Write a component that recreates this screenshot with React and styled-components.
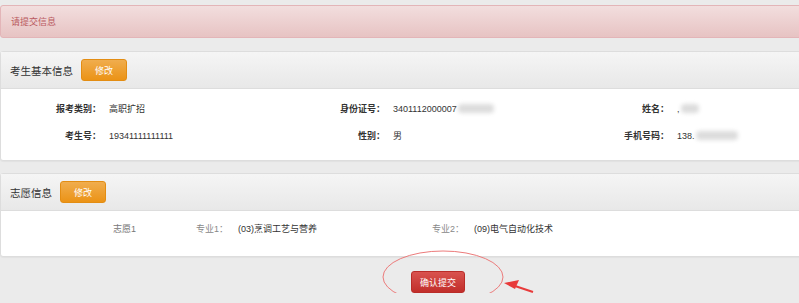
import styled, { createGlobalStyle } from "styled-components";

const GlobalStyle = createGlobalStyle`
    html, body {
        margin: 0;
        padding: 0;
        background: #ebebeb;
        overflow: hidden;
    }
    body {
        font-family: "Liberation Sans", "Noto Sans CJK SC", sans-serif;
    }
`;

function App() {
    return (
        <Page>
            <GlobalStyle />
            <Alert>请提交信息</Alert>

            <Panel>
                <PanelHeading>
                    <Title>考生基本信息</Title>
                    <EditButton>修改</EditButton>
                </PanelHeading>
                <InfoBody>
                    <InfoGrid>
                        <Label>报考类别：</Label>
                        <Value>高职扩招</Value>
                        <Label>身份证号：</Label>
                        <Value>
                            3401112000007<Blur $w={36} />
                        </Value>
                        <Label>姓名：</Label>
                        <Value>
                            ,<Blur $w={18} />
                        </Value>

                        <Label>考生号：</Label>
                        <Value>19341111111111</Value>
                        <Label>性别：</Label>
                        <Value>男</Value>
                        <Label>手机号码：</Label>
                        <Value>
                            138.<Blur $w={42} />
                        </Value>
                    </InfoGrid>
                </InfoBody>
            </Panel>

            <Panel>
                <PanelHeading>
                    <Title>志愿信息</Title>
                    <EditButton>修改</EditButton>
                </PanelHeading>
                <WishBody>
                    <WishName>志愿1</WishName>
                    <WishLabel>专业1：</WishLabel>
                    <WishValue>(03)烹调工艺与营养</WishValue>
                    <WishLabel>专业2：</WishLabel>
                    <WishValue>(09)电气自动化技术</WishValue>
                </WishBody>
            </Panel>

            <Actions>
                <SubmitButton>确认提交</SubmitButton>
                <Mark width="160" height="60" viewBox="0 0 160 60">
                    <ellipse cx="61" cy="28" rx="60" ry="26" fill="none" stroke="#ec7b7b" strokeWidth="1" />
                    <path d="M127 35 L151 43" stroke="#e83a3a" strokeWidth="2" />
                    <path d="M122 34 L137 31 L133 40 Z" fill="#e83a3a" />
                </Mark>
            </Actions>
        </Page>
    );
}

const Page = styled.div`
    width: 876px;
    padding-top: 5px;
    font-family: "Liberation Sans", "Noto Sans CJK SC", sans-serif;
`;

const Alert = styled.div`
    height: 31px;
    display: flex;
    align-items: center;
    padding-left: 10px;
    border: 1px solid #e3b5b8;
    border-radius: 3px;
    background: linear-gradient(to bottom, #f2dede, #e7c3c3);
    color: #b9595f;
    font-size: 9px;
    margin-bottom: 13px;
`;

const Panel = styled.div`
    background: #fff;
    border: 1px solid #dddddd;
    border-radius: 3px;
    margin-bottom: 12px;
    box-shadow: 0 1px 1px rgba(0, 0, 0, 0.04);
`;

const PanelHeading = styled.div`
    height: 36px;
    display: flex;
    align-items: center;
    gap: 8px;
    padding-left: 9px;
    background: linear-gradient(to bottom, #f5f5f5, #e8e8e8);
    border-bottom: 1px solid #dddddd;
`;

const Title = styled.span`
    font-size: 10.5px;
    color: #333;
`;

const EditButton = styled.button`
    width: 46px;
    height: 22px;
    border: 1px solid #e38d13;
    border-radius: 3px;
    background: linear-gradient(to bottom, #f0ad4e, #eb9316);
    color: #fff;
    font-family: inherit;
    font-size: 9px;
    padding: 0;
`;

const InfoBody = styled.div`
    height: 71px;
    padding-top: 6px;
    box-sizing: border-box;
`;

const InfoGrid = styled.div`
    display: grid;
    grid-template-columns: repeat(3, 95px 189px);
    grid-auto-rows: 27px;
    align-items: center;
    font-size: 9px;
`;

const Label = styled.span`
    text-align: right;
    font-weight: bold;
    color: #333;
    margin-right: -5px;
`;

const Value = styled.span`
    padding-left: 13px;
    color: #333;
    display: flex;
    align-items: center;
`;

const Blur = styled.span`
    display: inline-block;
    width: ${(p) => p.$w}px;
    height: 9px;
    margin-left: 1px;
    border-radius: 4px;
    background: #dcdcdc;
    filter: blur(2px);
`;

const WishBody = styled.div`
    height: 45px;
    display: flex;
    align-items: flex-start;
    padding-top: 11px;
    box-sizing: border-box;
    font-size: 9px;
    color: #333;
`;

const WishName = styled.span`
    margin-left: 112px;
    width: 83px;
    color: #777;
`;

const WishLabel = styled.span`
    width: 42px;
    color: #888;
`;

const WishValue = styled.span`
    width: 194px;
    color: #333;
`;

const Actions = styled.div`
    position: relative;
    display: flex;
    justify-content: center;
    padding-top: 2px;
`;

const SubmitButton = styled.button`
    width: 54px;
    height: 22px;
    border: 1px solid #b92c28;
    border-radius: 3px;
    background: linear-gradient(to bottom, #d9534f, #c12e2a);
    color: #fff;
    font-family: inherit;
    font-size: 9px;
    padding: 0;
`;

const Mark = styled.svg`
    position: absolute;
    left: 382px;
    top: -20px;
    pointer-events: none;
`;

export default App;
